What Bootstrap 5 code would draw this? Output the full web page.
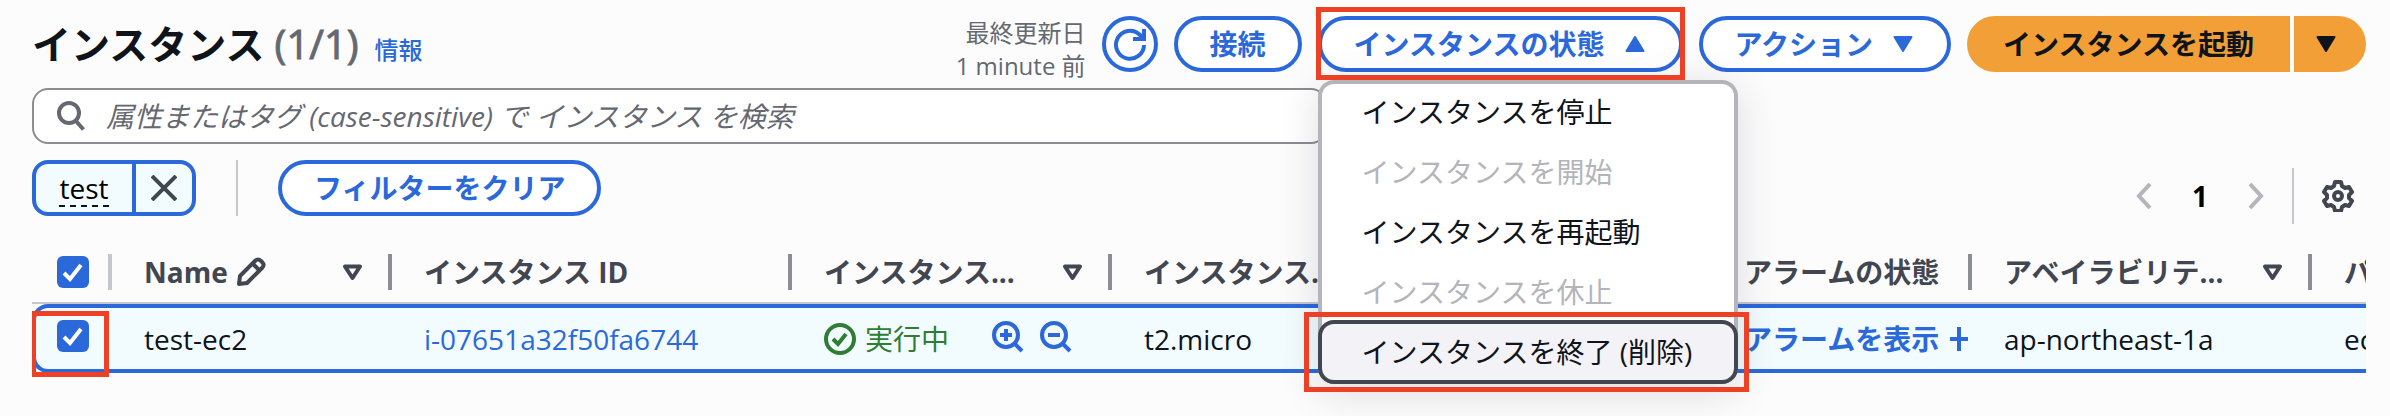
<!DOCTYPE html>
<html lang="ja">
<head>
<meta charset="utf-8">
<meta name="viewport" content="width=device-width, initial-scale=1">
<title>インスタンス</title>
<link rel="stylesheet" href="https://cdn.jsdelivr.net/npm/bootstrap@5.3.0/dist/css/bootstrap.min.css">
<style>
:root { --ink:#0f141a; --head:#424650; --muted:#656871; --blue:#2b69da; --line:#c6c6cd; --off:#b4b4bb; --mark:#ee4025; --pick:#f2fcff; }
body { background:#fcfcfd; color:var(--ink); font-family:"Open Sans","Noto Sans CJK JP",sans-serif; font-size:28px; line-height:40px; }
.page { padding:16px 24px 0 32px; min-height:100vh; }
a { color:var(--blue); text-decoration:none; }
svg { display:block; flex:none; }
.topbar { height:56px; }
.title { font-size:39px; line-height:56px; font-weight:700; }
.count { font-size:40px; font-weight:400; color:var(--muted); -webkit-text-stroke:1px var(--muted); }
.info { font-size:24px; font-weight:500; margin-left:16px; }
.updated { font-size:24px; line-height:33px; color:var(--muted); }
.pill { height:56px; padding:0 32px; border:4px solid var(--blue); border-radius:28px; background:#fff; color:var(--blue); font-size:28px; line-height:40px; font-weight:700; display:flex; align-items:center; white-space:nowrap; }
.pill:hover { color:var(--blue); border-color:var(--blue); }
.pill.round { width:56px; padding:0; justify-content:center; }
.pill.caret { gap:20px; padding-right:34px; }
.caret[aria-expanded="true"] svg { transform:rotate(180deg); }
.pill.launch { background:#f29f38; border-color:#f29f38; color:var(--ink); }
.launch.start { border-radius:28px 0 0 28px; }
.pill.launch.more { border-radius:0 28px 28px 0; width:72px; padding:0 8px 0 0; justify-content:center; }
.split { gap:4px; }
.marked::after { content:""; position:absolute; border:5px solid var(--mark); pointer-events:none; z-index:20; }
.state-box::after { inset:-9px -2px -8px -2px; }
.state-menu { position:absolute; top:64px; left:0; width:420px; margin:0; padding:0; list-style:none; z-index:10; background:#fff; border:4px solid var(--off); border-radius:16px; box-shadow:0 8px 40px 2px rgba(0,7,22,.12); }
.state-menu li { margin:-4px; position:relative; }
.state-menu li + li { margin-top:0; }
.state-menu button { display:block; width:100%; height:64px; border:4px solid transparent; border-radius:16px; background:none; padding:0 40px; text-align:left; color:var(--ink); white-space:nowrap; }
.state-menu button:disabled { color:var(--off); }
.state-menu .active-item { border-color:var(--head); background:#f3f3f7; }
.end-box::after { inset:-8px -11px -8px -14px; }
.search { width:55.5%; height:56px; border:2px solid #8c8c94; border-radius:16px; background:#fff; padding:0 22px; gap:20px; margin-top:16px; }
.search input { border:0; outline:0; background:none; flex:1; min-width:0; padding:0; }
.search input::placeholder { color:var(--muted); font-style:italic; opacity:1; }
.filters { margin-top:16px; height:56px; }
.token { height:56px; border:4px solid var(--blue); border-radius:16px; background:var(--pick); overflow:hidden; }
.token button { border:0; background:none; padding:0; }
.token-name { width:96px; display:flex; justify-content:center; align-items:center; }
.token-name span { border-bottom:2px dashed var(--ink); line-height:34px; padding-top:2px; }
.token .token-x { width:60px; border-left:4px solid var(--blue); display:flex; align-items:center; justify-content:center; }
.rule { width:2px; height:56px; background:var(--line); }
.filters .rule { margin:0 40px; }
.pager { margin-top:8px; height:56px; }
.pager .rule { margin:0 28px; }
.pager button { border:0; background:none; padding:0; }
.pager .page-no { width:96px; }
.pager .gear { margin-right:12px; }
.grid-wrap { margin-top:26px; padding-bottom:8px; overflow:hidden; }
.inst-grid.table { table-layout:fixed; width:2720px; margin:0; border-collapse:separate; border-spacing:0; color:var(--ink); --bs-table-bg:transparent; }
.inst-grid.table > * > tr > * { padding:0 0 0 32px; border:0 solid var(--blue); vertical-align:middle; white-space:nowrap; position:relative; }
.inst-grid.table > thead > tr > th { height:62px; color:var(--head); border-bottom:2px solid var(--line); }
.inst-grid.table > thead > tr > th::after { content:""; position:absolute; right:0; top:12px; width:4px; height:36px; background:#8c8c94; }
.inst-grid.table > thead > tr > th:first-child::after { background:var(--line); }
.inst-grid.table > tbody > tr > td { height:69px; border-width:4px 0; background:var(--pick); }
.inst-grid.table > tbody > tr > td:first-child { border-left-width:4px; border-radius:16px 0 0 16px; padding-left:21px; }
.inst-grid.table > thead > tr > th:first-child { padding-left:25px; }
.head-cell { display:flex; align-items:center; justify-content:space-between; padding-right:29px; }
.row-box::after { inset:3px 3px -8px -5px; }
.pick { appearance:none; display:block; width:32px; height:32px; margin:0; border:0; border-radius:6px; background:var(--blue) url("data:image/svg+xml,%3Csvg xmlns='http://www.w3.org/2000/svg' viewBox='0 0 32 32'%3E%3Cpath d='M7 17l6 6 11-14' fill='none' stroke='white' stroke-width='4'/%3E%3C/svg%3E"); }
td .pick { margin-bottom:5px; }
.instance-id { font-weight:500; }
.ok { color:#2f7d32; gap:9px; }
.zoomers { gap:16px; margin-right:40px; padding-bottom:4px; }
.zoomers button { border:0; background:none; padding:0; }
</style>
</head>
<body>
<svg width="0" height="0" class="position-absolute" aria-hidden="true">
  <symbol id="sort" viewBox="0 0 21 17"><path d="M3 2.500h15L10.500 14z" fill="none" stroke="#424650" stroke-width="4" stroke-linejoin="round"/></symbol>
  <symbol id="down" viewBox="0 0 20 16"><path d="M1.500 1h17L10 15z" fill="currentColor" stroke="currentColor" stroke-width="2" stroke-linejoin="round"/></symbol>
</svg>
<main class="page">
  <header class="topbar d-flex justify-content-between align-items-start">
    <h1 class="title mb-0 text-nowrap">インスタンス <span class="count">(1/1)</span><a href="#" class="info">情報</a></h1>
    <div class="d-flex gap-3 align-items-start">
      <div class="updated text-end text-nowrap">最終更新日<br>1 minute 前</div>
      <button type="button" class="btn pill round" aria-label="更新">
        <svg width="34" height="34" viewBox="0 0 34 34" fill="none" stroke="currentColor" stroke-width="4"><path d="M31 18a14 14 0 1 1-4.500-10.500l3 3"/><path d="M31 2v10H20"/></svg>
      </button>
      <button type="button" class="btn pill">接続</button>
      <div class="state-box marked position-relative">
        <button type="button" class="btn pill caret" aria-expanded="true">インスタンスの状態
          <svg width="20" height="16"><use href="#down"/></svg>
        </button>
        <ul class="state-menu">
          <li><button type="button">インスタンスを停止</button></li>
          <li><button type="button" disabled>インスタンスを開始</button></li>
          <li><button type="button">インスタンスを再起動</button></li>
          <li><button type="button" disabled>インスタンスを休止</button></li>
          <li class="end-box marked"><button type="button" class="active-item">インスタンスを終了 (削除)</button></li>
        </ul>
      </div>
      <button type="button" class="btn pill caret">アクション
        <svg width="20" height="16"><use href="#down"/></svg>
      </button>
      <div class="split d-flex">
        <button type="button" class="btn pill launch start">インスタンスを起動</button>
        <button type="button" class="btn pill launch more" aria-label="その他"><svg width="20" height="16"><use href="#down"/></svg></button>
      </div>
    </div>
  </header>

  <label class="search d-flex align-items-center">
    <svg width="30" height="30" viewBox="0 0 30 30" fill="none" stroke="#656871" stroke-width="4"><circle cx="13" cy="12" r="10"/><path d="M19.500 19.500l8 9"/></svg>
    <input type="text" aria-label="検索" placeholder="属性またはタグ (case-sensitive) で インスタンス を検索">
  </label>

  <div class="filters d-flex justify-content-between">
    <div class="d-flex">
      <div class="token d-flex">
        <button type="button" class="token-name"><span>test</span></button>
        <button type="button" class="token-x" aria-label="削除"><svg width="26" height="26" viewBox="0 0 26 26" stroke="#424650" stroke-width="4"><path d="M1 1l24 24M25 1L1 25"/></svg></button>
      </div>
      <div class="rule"></div>
      <button type="button" class="btn pill">フィルターをクリア</button>
    </div>
    <div class="pager d-flex align-items-center">
      <nav class="d-flex align-items-center" aria-label="ページ">
        <button type="button" disabled aria-label="前へ"><svg width="16" height="28" viewBox="0 0 16 28" fill="none" stroke="#b4b4bb" stroke-width="4"><path d="M14 2L3 14l11 12"/></svg></button>
        <button type="button" class="page-no fw-bold">1</button>
        <button type="button" disabled aria-label="次へ"><svg width="16" height="28" viewBox="0 0 16 28" fill="none" stroke="#b4b4bb" stroke-width="4"><path d="M2 2l11 12L2 26"/></svg></button>
      </nav>
      <div class="rule"></div>
      <button type="button" class="gear" aria-label="設定">
        <svg width="32" height="32" viewBox="0 0 32 32" fill="none" stroke="#424650" stroke-width="4" stroke-linejoin="round"><path d="M13 2h6l1 4 3 2 4-1 3 5-3 3v3l3 3-3 5-4-1-3 2-1 4h-6l-1-4-3-2-4 1-3-5 3-3v-3l-3-3 3-5 4 1 3-2z"/><circle cx="16" cy="16" r="4"/></svg>
      </button>
    </div>
  </div>

  <div class="grid-wrap">
    <table class="table inst-grid">
      <colgroup><col style="width:80px"><col style="width:280px"><col style="width:400px"><col style="width:320px"><col style="width:320px"><col style="width:280px"><col style="width:260px"><col style="width:340px"><col style="width:440px"></colgroup>
      <thead>
        <tr>
          <th><input type="checkbox" class="pick" checked aria-label="すべて選択"></th>
          <th><div class="head-cell"><span class="d-flex align-items-center">Name
            <svg class="ms-2" width="30" height="30" viewBox="0 0 30 30" fill="none" stroke="#424650" stroke-width="4" stroke-linejoin="round"><path d="M3 27l1-8L19 4q3-3 6 0l1 1q3 3 0 6L11 26z"/><path d="M17 7l6 6"/></svg></span>
            <svg width="21" height="17"><use href="#sort"/></svg></div></th>
          <th>インスタンス ID</th>
          <th><div class="head-cell"><span>インスタンス...</span><svg width="21" height="17"><use href="#sort"/></svg></div></th>
          <th>インスタンス...</th>
          <th></th>
          <th>アラームの状態</th>
          <th><div class="head-cell"><span>アベイラビリテ...</span><svg width="21" height="17"><use href="#sort"/></svg></div></th>
          <th>パブリック...</th>
        </tr>
      </thead>
      <tbody>
        <tr>
          <td class="row-box marked"><input type="checkbox" class="pick" checked aria-label="test-ec2 を選択"></td>
          <td>test-ec2</td>
          <td><a href="#" class="instance-id">i-07651a32f50fa6744</a></td>
          <td><div class="d-flex align-items-center justify-content-between">
            <span class="ok d-flex align-items-center"><svg width="32" height="32" viewBox="0 0 32 32" fill="none" stroke="currentColor" stroke-width="4"><circle cx="16" cy="16" r="14"/><path d="M9 16l5 5 8-10"/></svg>実行中</span>
            <span class="zoomers d-flex">
              <button type="button" aria-label="フィルターに追加"><svg width="32" height="32" viewBox="0 0 32 32" fill="none" stroke="#2b69da" stroke-width="4"><circle cx="14" cy="14" r="12"/><path d="M22 22l8 8M8 14h12M14 8v12"/></svg></button>
              <button type="button" aria-label="フィルターから除外"><svg width="32" height="32" viewBox="0 0 32 32" fill="none" stroke="#2b69da" stroke-width="4"><circle cx="14" cy="14" r="12"/><path d="M22 22l8 8M8 14h12"/></svg></button>
            </span></div></td>
          <td>t2.micro</td>
          <td></td>
          <td><a href="#" class="fw-bold d-flex align-items-center">アラームを表示<svg class="ms-2" width="24" height="24" viewBox="0 0 24 24" stroke="#2b69da" stroke-width="4"><path d="M3 12h18M12 0v24"/></svg></a></td>
          <td>ap-northeast-1a</td>
          <td>ec2</td>
        </tr>
      </tbody>
    </table>
  </div>
</main>
<script src="https://cdn.jsdelivr.net/npm/bootstrap@5.3.0/dist/js/bootstrap.bundle.min.js"></script>
</body>
</html>
